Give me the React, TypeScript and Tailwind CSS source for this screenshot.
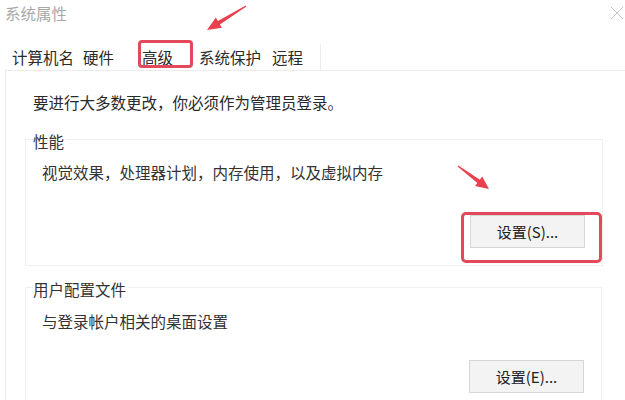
import React from "react";

const FONT = "font-['Noto_Sans_CJK_SC','Noto_Sans',sans-serif]";

function GroupBox({
  label,
  text,
  button,
  highlight,
  width,
  contentPt,
  buttonMt,
}: {
  label: string;
  text: string;
  button: string;
  highlight?: boolean;
  width: string;
  contentPt: string;
  buttonMt: string;
}) {
  return (
    <div className={`relative ml-[19px] ${width} border border-[#efefef] ${contentPt} pl-[16px] pr-[17px] pb-[17px]`}>
      <span className="absolute -top-[10px] left-[7px] bg-white pr-[2px] text-[15.5px] leading-[22px] text-[#333]">
        {label}
      </span>
      <p className="text-[15.5px] leading-[22px] text-[#333]">{text}</p>
      <div className={`flex justify-end ${buttonMt}`}>
        <div className="relative">
          <button className="w-[115px] h-[33px] bg-[#f3f3f3] border border-[#d6d6d6] text-[15px] leading-[22px] text-[#222]">
            {button}
          </button>
          {highlight && (
            <span className="absolute -left-[9px] -right-[17px] -top-[3px] -bottom-[15px] border-[3px] border-[#e2495b] rounded-[5px]" />
          )}
        </div>
      </div>
    </div>
  );
}

export default function App() {
  return (
    <div className={`relative w-[625px] h-[400px] overflow-hidden bg-white ${FONT}`}>
      {/* Title bar */}
      <div className="flex items-start justify-between h-[44px] pl-[5px] pr-[1px] pt-[2px]">
        <span className="text-[15.5px] leading-[22px] text-[#a8a8a8]">系统属性</span>
        <svg width="14" height="14" viewBox="0 0 14 14" className="mt-[4px]">
          <path d="M1 1 L13 13 M13 1 L1 13" stroke="#c4c4c4" strokeWidth="1" fill="none" />
        </svg>
      </div>

      {/* Tabs */}
      <div className="flex items-start h-[26px] pt-[2px] w-[321px] border-r border-[#ececec] text-[15.5px] leading-[22px] text-[#2a2a2a]">
        <span className="ml-[12px]">计算机名</span>
        <span className="ml-[9px]">硬件</span>
        <span className="relative ml-[28px]">
          高级
          <span className="absolute -left-[4px] -right-[20px] -top-[6px] bottom-[0px] border-[3px] border-[#e2495b] rounded-[4px]" />
        </span>
        <span className="ml-[26px]">系统保护</span>
        <span className="ml-[11px]">远程</span>
      </div>

      {/* Panel */}
      <div className="ml-[5px] h-[330px] border-l border-t border-[#ececec] pt-[20px]">
        <p className="pl-[27px] text-[15.5px] leading-[22px] text-[#2a2a2a]">
          要进行大多数更改，你必须作为管理员登录。
        </p>
        <div className="mt-[26px]">
          <GroupBox
            label="性能"
            text="视觉效果，处理器计划，内存使用，以及虚拟内存"
            button="设置(S)..."
            highlight
            width="w-[578px]"
            contentPt="pt-[21px]"
            buttonMt="mt-[32px]"
          />
        </div>
        <div className="mt-[21px]">
          <GroupBox
            label="用户配置文件"
            text="与登录帐户相关的桌面设置"
            button="设置(E)..."
            width="w-[577px]"
            contentPt="pt-[22px]"
            buttonMt="mt-[28px]"
          />
        </div>
      </div>

      {/* Annotation arrows */}
      <svg className="absolute inset-0 pointer-events-none" width="625" height="400" viewBox="0 0 625 400">
        <polygon
          points="245.7,5.6 217.9,21.0 215.8,17.6 207,30 222.0,27.8 219.9,24.4 246.3,6.4"
          fill="#e8404f"
        />
        <polygon
          points="458.4,165.5 479.8,179.7 482.2,176.5 489,189 475.0,186.1 477.4,182.9 457.6,166.5"
          fill="#e8404f"
        />
      </svg>
    </div>
  );
}
